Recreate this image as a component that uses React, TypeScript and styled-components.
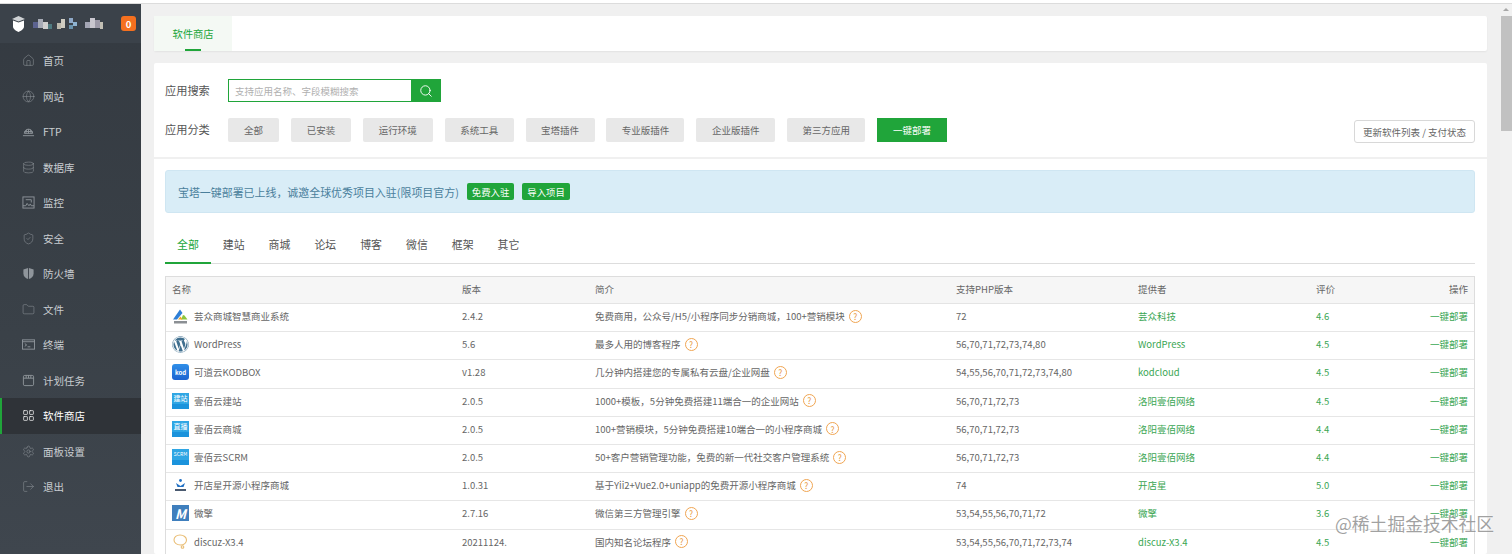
import React from "react";
import styled, { createGlobalStyle } from "styled-components";
import {
  Database,
  Folder,
  Globe,
  House,
  LayoutGrid,
  LogOut,
  Search,
  Settings,
  ShieldCheck,
} from "lucide-react";
import { FaWordpress } from "react-icons/fa";

const GREEN = "#20a53a";
const FONT = '"Noto Sans CJK SC", "Noto Sans", sans-serif';

const GlobalStyle = createGlobalStyle`
  html, body {
    margin: 0;
    padding: 0;
    background: #f0f0f0;
    font-family: ${FONT};
    overflow: hidden;
  }
  * {
    box-sizing: border-box;
  }
`;

const Page = styled.div`
  width: 1512px;
  height: 554px;
  display: flex;
  flex-direction: column;
  overflow: hidden;
  position: relative;
`;

const TopStrip = styled.div`
  height: 4px;
  flex: none;
  background: #fff;
  border-bottom: 1px solid #dcdcdc;
`;

const Body = styled.div`
  flex: 1;
  min-height: 0;
  display: flex;
`;

const Sidebar = styled.aside`
  width: 141px;
  flex: none;
  background: linear-gradient(180deg, #343a41 0%, #3a4148 60%, #3f464e 100%);
  color: #c9cdd1;
`;

const Brand = styled.div`
  height: 39px;
  display: flex;
  align-items: center;
  gap: 8px;
  padding: 0 5px 0 12px;
  background: #3b424a;
`;

const Badge = styled.span`
  margin-left: auto;
  width: 15px;
  height: 15px;
  border-radius: 3px;
  background: #f5701f;
  color: #fff;
  font-size: 9.5px;
  font-weight: 700;
  display: flex;
  align-items: center;
  justify-content: center;
`;

const Nav = styled.nav`
  display: flex;
  flex-direction: column;
`;

const NavItem = styled.a<{ $active?: boolean }>`
  height: 35.5px;
  display: flex;
  align-items: center;
  gap: 8px;
  padding-left: ${(p) => (p.$active ? 20 : 22)}px;
  font-size: 10.5px;
  color: ${(p) => (p.$active ? "#fff" : "#c9cdd1")};
  background: ${(p) => (p.$active ? "#2f3338" : "transparent")};
  border-left: ${(p) => (p.$active ? `2px solid ${GREEN}` : "none")};

  svg {
    width: 13px;
    height: 13px;
    flex: none;
    color: ${(p) => (p.$active ? "#efefef" : "#8f959b")};
  }
`;

const Main = styled.main`
  flex: 1;
  min-width: 0;
  padding: 12px 13px 0;
  display: flex;
  flex-direction: column;
  gap: 12px;
`;

const TabCard = styled.div`
  height: 35px;
  flex: none;
  display: flex;
  background: #fff;
  border-radius: 2px;
  box-shadow: 0 1px 2px rgba(0, 0, 0, 0.06);
`;

const PageTab = styled.div`
  width: 78px;
  position: relative;
  display: flex;
  align-items: center;
  justify-content: center;
  background: #f4f9f4;
  color: ${GREEN};
  font-size: 10.3px;

  &::after {
    content: "";
    position: absolute;
    left: 31px;
    bottom: 0;
    width: 16px;
    height: 2px;
    background: ${GREEN};
  }
`;

const Card = styled.section`
  flex: 1;
  min-height: 0;
  background: #fff;
  border-radius: 2px;
  overflow: hidden;
`;

const Filters = styled.div`
  padding: 16px 12px 14px 11px;
  display: flex;
  flex-direction: column;
  gap: 16px;
  border-bottom: 2px solid #f0f0f0;
`;

const FilterRow = styled.div`
  display: flex;
  align-items: flex-start;
`;

const FilterLabel = styled.span`
  width: 63px;
  flex: none;
  font-size: 11.2px;
  line-height: 23px;
  color: #555;
`;

const SearchInput = styled.div`
  width: 183px;
  height: 23px;
  border: 1px solid ${GREEN};
  border-right: none;
  padding-left: 6px;
  display: flex;
  align-items: center;
  font-size: 9.5px;
  color: #b0b0b0;
`;

const SearchButton = styled.button`
  width: 30px;
  height: 23px;
  border: none;
  padding: 0;
  background: ${GREEN};
  color: #fff;
  display: flex;
  align-items: center;
  justify-content: center;
`;

const Categories = styled.div`
  display: flex;
  gap: 11.9px;
`;

const Category = styled.button<{ $width: number; $active?: boolean }>`
  width: ${(p) => p.$width}px;
  height: 24px;
  border: none;
  padding: 0;
  border-radius: ${(p) => (p.$active ? 0 : 2)}px;
  font-family: ${FONT};
  font-size: 9.5px;
  background: ${(p) => (p.$active ? GREEN : "#e8e8e8")};
  color: ${(p) => (p.$active ? "#fff" : "#666")};
`;

const RefreshButton = styled.button`
  margin: 2px 0 0 auto;
  width: 121px;
  height: 23px;
  padding: 0;
  background: #fff;
  border: 1px solid #d8d8d8;
  border-radius: 3px;
  font-family: ${FONT};
  font-size: 9.5px;
  color: #666;
`;

const Content = styled.div`
  padding: 11px 12px 0 11px;
`;

const Notice = styled.div`
  height: 43px;
  display: flex;
  align-items: center;
  gap: 8px;
  padding-left: 12px;
  background: #d9edf7;
  border: 1px solid #cfe6f2;
  border-radius: 3px;
  color: #4a7f9c;
  font-size: 10.95px;
`;

const NoticeButton = styled.span`
  height: 17px;
  padding: 0 5px;
  display: flex;
  align-items: center;
  background: ${GREEN};
  border-radius: 2px;
  color: #fff;
  font-size: 9.4px;
`;

const TypeTabs = styled.div`
  margin-top: 12px;
  height: 39px;
  display: flex;
  border-bottom: 1px solid #ddd;
`;

const TypeTab = styled.div<{ $active?: boolean }>`
  width: 45.8px;
  height: 39px;
  display: flex;
  align-items: center;
  justify-content: center;
  font-size: 10.9px;
  color: ${(p) => (p.$active ? GREEN : "#555")};
  border-bottom: 2px solid ${(p) => (p.$active ? GREEN : "transparent")};
`;

const Table = styled.div`
  margin-top: 12px;
  border: 1px solid #ddd;
`;

const COLUMNS = "290px 133px 361px 182px 178px 80px 1fr";

const HeadRow = styled.div`
  height: 27px;
  padding-bottom: 2px;
  display: grid;
  grid-template-columns: ${COLUMNS};
  align-items: center;
  background: #f6f6f6;
  border-bottom: 1px solid #e4e4e4;
  font-size: 9.5px;
  color: #666;
`;

const Row = styled.div`
  height: 28.2px;
  padding-bottom: 3px;
  display: grid;
  grid-template-columns: ${COLUMNS};
  align-items: center;
  border-bottom: 1px solid #e6e6e6;
  font-size: 9.5px;
  color: #666;
`;

const Cell = styled.div<{ $green?: boolean; $right?: boolean }>`
  display: flex;
  align-items: center;
  padding: 0 6px;
  white-space: nowrap;
  color: ${(p) => (p.$green ? "#3aa653" : "inherit")};
  justify-content: ${(p) => (p.$right ? "flex-end" : "flex-start")};
`;

const AppName = styled.span`
  margin-left: 5px;
`;

const Help = styled.span`
  width: 13px;
  height: 13px;
  margin-left: 4px;
  flex: none;
  border: 1px solid #f0a552;
  border-radius: 50%;
  color: #e89a45;
  font-size: 8.5px;
  line-height: 1;
  display: flex;
  align-items: center;
  justify-content: center;
`;

const LogoSlot = styled.span`
  width: 17px;
  height: 17px;
  flex: none;
  display: flex;
  align-items: center;
  justify-content: center;

  svg {
    display: block;
  }
`;

const KodTile = styled.span`
  width: 17px;
  height: 16px;
  border-radius: 3px;
  background: linear-gradient(180deg, #2f8fe8, #1c63d0);
  color: #fff;
  font-size: 6px;
  font-weight: 700;
  display: flex;
  align-items: center;
  justify-content: center;
`;

const YibaiTile = styled.span<{ $small?: boolean }>`
  width: 17px;
  height: 16px;
  background: #2fa6e4;
  color: #fff;
  font-size: ${(p) => (p.$small ? 5 : 7)}px;
  line-height: 10px;
  text-align: center;
  white-space: nowrap;
  overflow: hidden;
  border-bottom: 5px solid #1b93dc;
`;

const WeiqingTile = styled.span`
  width: 17px;
  height: 16px;
  background: #3f7fbd;
  color: #fff;
  font-size: 13px;
  font-weight: 700;
  font-style: italic;
  line-height: 1;
  display: flex;
  align-items: center;
  justify-content: center;
`;

const Scrollbar = styled.div`
  width: 12px;
  flex: none;
  background: #f1f1f1;
  display: flex;
  flex-direction: column;
  align-items: center;
  padding-top: 4px;
`;

const ScrollArrow = styled.span`
  width: 0;
  height: 0;
  border-left: 3px solid transparent;
  border-right: 3px solid transparent;
  border-bottom: 3px solid #a8a8a8;
`;

const ScrollThumb = styled.div`
  margin-top: 5px;
  width: 11px;
  height: 115px;
  background: #c1c1c1;
`;

const Watermark = styled.div`
  position: absolute;
  left: 1335px;
  top: 511px;
  font-size: 17.8px;
  line-height: 24px;
  white-space: nowrap;
  color: rgba(130, 130, 130, 0.75);
  text-shadow: 0 0 2px rgba(255, 255, 255, 0.9);
`;

const BrandLogo = () => (
  <svg width="13" height="16" viewBox="0 0 13 16">
    <path d="M6.5 0 13 3 6.5 5.4 0 3Z" fill="#cfd2d5" />
    <path d="M1 4.6 6.5 6.6 12 4.6V10.5C12 13 9 15 6.5 16 4 15 1 13 1 10.5Z" fill="#fff" />
  </svg>
);

const BrandMosaic = () => (
  <svg width="72" height="13" viewBox="0 0 72 13">
    <defs>
      <filter id="mosaicBlur">
        <feGaussianBlur stdDeviation="0.6" />
      </filter>
    </defs>
    <g filter="url(#mosaicBlur)">
      <rect x="0" y="5" width="5" height="6" fill="#5b6390" />
      <rect x="5" y="2" width="5" height="9" fill="#a7abb6" />
      <rect x="10" y="5" width="5" height="7" fill="#cfcfcf" />
      <rect x="15" y="7" width="4" height="5" fill="#4f7a80" />
      <rect x="24" y="6" width="4" height="6" fill="#bdb9ad" />
      <rect x="28" y="2" width="4" height="9" fill="#d0cdc2" />
      <rect x="36" y="1" width="4" height="5" fill="#8fa9c8" />
      <rect x="40" y="5" width="4" height="4" fill="#8eb3d1" />
      <rect x="36" y="8" width="4" height="4" fill="#6b93ad" />
      <rect x="52" y="5" width="5" height="6" fill="#a4a6b5" />
      <rect x="57" y="1" width="5" height="10" fill="#c9c7cf" />
      <rect x="62" y="3" width="5" height="8" fill="#9d9aa8" />
      <rect x="67" y="5" width="3" height="7" fill="#c2bfb4" />
    </g>
  </svg>
);

const FtpIcon = () => (
  <svg viewBox="0 0 14 14" fill="none" stroke="currentColor" strokeWidth="1">
    <path d="M2.5 9a4.500 4.500 0 0 1 9 0Z" />
    <path d="M7 4.500V9M5 5c-.6 1.200-.8 2.600-.8 4M9 5c.6 1.200.8 2.600.8 4M2.800 7h8.400" />
    <path d="M1 11.500h12" />
  </svg>
);

const MonitorIcon = () => (
  <svg viewBox="0 0 14 14" fill="none" stroke="currentColor" strokeWidth="1">
    <rect x="1" y="1" width="12" height="12" />
    <path d="M1 10.500h3l1.500-2.500 2 2.500 1.500-2 1 2h3M4 4h6v3" />
  </svg>
);

const FirewallIcon = () => (
  <svg viewBox="0 0 14 14" fill="currentColor">
    <path d="M6.500 1 1.500 2.600V7c0 3 2.200 5 5 6Z" />
    <path d="M7.500 1 12.500 2.600V7c0 3-2.200 5-5 6Z" />
  </svg>
);

const TerminalIcon = () => (
  <svg viewBox="0 0 14 14" fill="none" stroke="currentColor" strokeWidth="1">
    <rect x="0.500" y="2" width="13" height="10" />
    <path d="M0.500 4h13M3 6l2 1.500L3 9M6 9.500h3" />
  </svg>
);

const ScheduleIcon = () => (
  <svg viewBox="0 0 14 14" fill="none" stroke="currentColor" strokeWidth="1">
    <rect x="1.500" y="1.500" width="11" height="11" rx="1.500" />
    <path d="M1.500 4.500h11M4.500 1.500v3M7 1.500v3M9.500 1.500v3" />
  </svg>
);

const YunzhongLogo = () => (
  <svg width="17" height="17" viewBox="0 0 17 17" fill="none">
    <path d="M1 11.500 8 1.500 10.500 5 5 11.500Z" fill="#2f7fd6" />
    <path d="M9 11.500 11 7l1.500.5 3 4Z" fill="#8cc63f" />
    <path d="M6 11.500 8.500 8.500l2 3Z" fill="#f5a623" />
    <rect x="2" y="13" width="13" height="2.500" fill="#8b8f94" />
  </svg>
);

const KaidianLogo = () => (
  <svg width="15" height="15" viewBox="0 0 15 15">
    <circle cx="7.500" cy="2.500" r="1.400" fill="#1f6fc4" />
    <path d="M3 5 7.500 8 12 5 10.500 9H4.500Z" fill="#1f6fc4" />
    <rect x="2" y="11" width="11" height="2" fill="#4a5a70" />
  </svg>
);

const DiscuzLogo = () => (
  <svg width="17" height="17" viewBox="0 0 17 17" fill="none" stroke="#e9bd74" strokeWidth="1.100">
    <path d="M8 2c3.800 0 6.500 2.200 6.500 5S12 12 8.500 12C5 12 2 10 2 7s2.500-5 6-5Z" />
    <circle cx="10.500" cy="14" r="1.300" />
  </svg>
);

const navItems = [
  { label: "首页", icon: <House strokeWidth={1} /> },
  { label: "网站", icon: <Globe strokeWidth={1} /> },
  { label: "FTP", icon: <FtpIcon /> },
  { label: "数据库", icon: <Database strokeWidth={1} /> },
  { label: "监控", icon: <MonitorIcon /> },
  { label: "安全", icon: <ShieldCheck strokeWidth={1} /> },
  { label: "防火墙", icon: <FirewallIcon /> },
  { label: "文件", icon: <Folder strokeWidth={1} /> },
  { label: "终端", icon: <TerminalIcon /> },
  { label: "计划任务", icon: <ScheduleIcon /> },
  { label: "软件商店", icon: <LayoutGrid strokeWidth={1.4} />, active: true },
  { label: "面板设置", icon: <Settings strokeWidth={1} /> },
  { label: "退出", icon: <LogOut strokeWidth={1} /> },
];

const categories = [
  { label: "全部", width: 51 },
  { label: "已安装", width: 60 },
  { label: "运行环境", width: 70 },
  { label: "系统工具", width: 69 },
  { label: "宝塔插件", width: 69 },
  { label: "专业版插件", width: 78 },
  { label: "企业版插件", width: 79 },
  { label: "第三方应用", width: 78 },
  { label: "一键部署", width: 70, active: true },
];

const typeTabs = ["全部", "建站", "商城", "论坛", "博客", "微信", "框架", "其它"];

const apps = [
  {
    logo: <YunzhongLogo />,
    name: "芸众商城智慧商业系统",
    version: "2.4.2",
    intro: "免费商用，公众号/H5/小程序同步分销商城，100+营销模块",
    php: "72",
    vendor: "芸众科技",
    score: "4.6",
  },
  {
    logo: <FaWordpress size={17} color="#3f6f8f" />,
    name: "WordPress",
    version: "5.6",
    intro: "最多人用的博客程序",
    php: "56,70,71,72,73,74,80",
    vendor: "WordPress",
    score: "4.5",
  },
  {
    logo: <KodTile>kod</KodTile>,
    name: "可道云KODBOX",
    version: "v1.28",
    intro: "几分钟内搭建您的专属私有云盘/企业网盘",
    php: "54,55,56,70,71,72,73,74,80",
    vendor: "kodcloud",
    score: "4.5",
  },
  {
    logo: <YibaiTile>建站</YibaiTile>,
    name: "壹佰云建站",
    version: "2.0.5",
    intro: "1000+模板，5分钟免费搭建11端合一的企业网站",
    php: "56,70,71,72,73",
    vendor: "洛阳壹佰网络",
    score: "4.5",
  },
  {
    logo: <YibaiTile>直播</YibaiTile>,
    name: "壹佰云商城",
    version: "2.0.5",
    intro: "100+营销模块，5分钟免费搭建10端合一的小程序商城",
    php: "56,70,71,72,73",
    vendor: "洛阳壹佰网络",
    score: "4.4",
  },
  {
    logo: <YibaiTile $small>SCRM</YibaiTile>,
    name: "壹佰云SCRM",
    version: "2.0.5",
    intro: "50+客户营销管理功能，免费的新一代社交客户管理系统",
    php: "56,70,71,72,73",
    vendor: "洛阳壹佰网络",
    score: "4.4",
  },
  {
    logo: <KaidianLogo />,
    name: "开店星开源小程序商城",
    version: "1.0.31",
    intro: "基于Yii2+Vue2.0+uniapp的免费开源小程序商城",
    php: "74",
    vendor: "开店星",
    score: "5.0",
  },
  {
    logo: <WeiqingTile>M</WeiqingTile>,
    name: "微擎",
    version: "2.7.16",
    intro: "微信第三方管理引擎",
    php: "53,54,55,56,70,71,72",
    vendor: "微擎",
    score: "3.6",
  },
  {
    logo: <DiscuzLogo />,
    name: "discuz-X3.4",
    version: "20211124.",
    intro: "国内知名论坛程序",
    php: "53,54,55,56,70,71,72,73,74",
    vendor: "discuz-X3.4",
    score: "4.5",
  },
];

const App: React.FC = () => {
  return (
    <Page>
      <GlobalStyle />
      <TopStrip />
      <Body>
        <Sidebar>
          <Brand>
            <BrandLogo />
            <BrandMosaic />
            <Badge>0</Badge>
          </Brand>
          <Nav>
            {navItems.map((item) => (
              <NavItem key={item.label} $active={item.active}>
                {item.icon}
                {item.label}
              </NavItem>
            ))}
          </Nav>
        </Sidebar>
        <Main>
          <TabCard>
            <PageTab>软件商店</PageTab>
          </TabCard>
          <Card>
            <Filters>
              <FilterRow>
                <FilterLabel>应用搜索</FilterLabel>
                <SearchInput>支持应用名称、字段模糊搜索</SearchInput>
                <SearchButton>
                  <Search size={14} strokeWidth={1.6} />
                </SearchButton>
              </FilterRow>
              <FilterRow>
                <FilterLabel>应用分类</FilterLabel>
                <Categories>
                  {categories.map((c) => (
                    <Category key={c.label} $width={c.width} $active={c.active}>
                      {c.label}
                    </Category>
                  ))}
                </Categories>
                <RefreshButton>更新软件列表 / 支付状态</RefreshButton>
              </FilterRow>
            </Filters>
            <Content>
              <Notice>
                宝塔一键部署已上线，诚邀全球优秀项目入驻(限项目官方)
                <NoticeButton>免费入驻</NoticeButton>
                <NoticeButton>导入项目</NoticeButton>
              </Notice>
              <TypeTabs>
                {typeTabs.map((t, i) => (
                  <TypeTab key={t} $active={i === 0}>
                    {t}
                  </TypeTab>
                ))}
              </TypeTabs>
              <Table>
                <HeadRow>
                  <Cell>名称</Cell>
                  <Cell>版本</Cell>
                  <Cell>简介</Cell>
                  <Cell>支持PHP版本</Cell>
                  <Cell>提供者</Cell>
                  <Cell>评价</Cell>
                  <Cell $right>操作</Cell>
                </HeadRow>
                {apps.map((app) => (
                  <Row key={app.name}>
                    <Cell>
                      <LogoSlot>{app.logo}</LogoSlot>
                      <AppName>{app.name}</AppName>
                    </Cell>
                    <Cell>{app.version}</Cell>
                    <Cell>
                      {app.intro}
                      <Help>?</Help>
                    </Cell>
                    <Cell>{app.php}</Cell>
                    <Cell $green>{app.vendor}</Cell>
                    <Cell $green>{app.score}</Cell>
                    <Cell $green $right>一键部署</Cell>
                  </Row>
                ))}
              </Table>
            </Content>
          </Card>
        </Main>
        <Scrollbar>
          <ScrollArrow />
          <ScrollThumb />
        </Scrollbar>
      </Body>
      <Watermark>@稀土掘金技术社区</Watermark>
    </Page>
  );
};

export default App;
